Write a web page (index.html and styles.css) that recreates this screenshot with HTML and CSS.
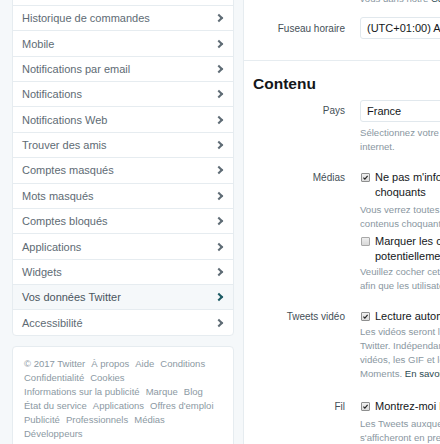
FILE: index.html
```html
<!DOCTYPE html>
<html lang="fr">
<head>
<meta charset="utf-8">
<title>Paramètres</title>
<link rel="stylesheet" href="styles.css">
</head>
<body>
<div class="page">
  <aside class="sidebar">
    <nav class="nav">
      <a class="nav-item"><span>Cartes et livraison</span><span class="chev"></span></a>
      <a class="nav-item"><span>Historique de commandes</span><span class="chev"></span></a>
      <a class="nav-item"><span>Mobile</span><span class="chev"></span></a>
      <a class="nav-item"><span>Notifications par email</span><span class="chev"></span></a>
      <a class="nav-item"><span>Notifications</span><span class="chev"></span></a>
      <a class="nav-item"><span>Notifications Web</span><span class="chev"></span></a>
      <a class="nav-item"><span>Trouver des amis</span><span class="chev"></span></a>
      <a class="nav-item"><span>Comptes masqués</span><span class="chev"></span></a>
      <a class="nav-item"><span>Mots masqués</span><span class="chev"></span></a>
      <a class="nav-item"><span>Comptes bloqués</span><span class="chev"></span></a>
      <a class="nav-item"><span>Applications</span><span class="chev"></span></a>
      <a class="nav-item"><span>Widgets</span><span class="chev"></span></a>
      <a class="nav-item is-active"><span>Vos données Twitter</span><span class="chev"></span></a>
      <a class="nav-item"><span>Accessibilité</span><span class="chev"></span></a>
    </nav>
    <footer class="site-footer">
      <span>© 2017 Twitter</span>
      <a>À propos</a>
      <a>Aide</a>
      <a>Conditions</a>
      <a>Confidentialité</a>
      <a>Cookies</a>
      <a>Informations sur la publicité</a>
      <a>Marque</a>
      <a>Blog</a>
      <a>État du service</a>
      <a>Applications</a>
      <a>Offres d'emploi</a>
      <a>Publicité</a>
      <a>Professionnels</a>
      <a>Médias</a>
      <a>Développeurs</a>
    </footer>
  </aside>

  <main class="panel">
    <section class="section section-top">
      <div class="form-row">
        <div class="label"></div>
        <div class="control">
          <p class="help">vous dans notre <a class="link">Centre de traduction</a>.</p>
        </div>
      </div>
      <div class="form-row row-tz">
        <div class="label">Fuseau horaire</div>
        <div class="control">
          <div class="select">(UTC+01:00) Amsterdam, Berlin, Berne, Rome</div>
        </div>
      </div>
    </section>

    <section class="section section-content">
      <h2 class="heading">Contenu</h2>
      <div class="form-row row-country">
        <div class="label">Pays</div>
        <div class="control">
          <div class="select">France</div>
          <p class="help help-country">Sélectionnez votre pays. Ce paramètre est enregistré sur ce navigateur<br>internet.</p>
        </div>
      </div>

      <div class="form-row row-media">
        <div class="label lh">Médias</div>
        <div class="control">
          <label class="check"><span class="box is-checked"><svg viewBox="0 0 10 10"><path d="M2 5.2 L4.1 7.3 L8 2.6"/></svg></span><span>Ne pas m'informer si les médias peuvent contenir des contenus<br>choquants</span></label>
          <p class="help help-a">Vous verrez toutes les photos et vidéos, même si elles contiennent des<br>contenus choquants.</p>
          <label class="check check-b"><span class="box"></span><span>Marquer les contenus multimédias que vous tweetez comme contenant des éléments<br>potentiellement choquants</span></label>
          <p class="help help-b">Veuillez cocher cette case si vos images ou vidéos sont susceptibles d'être choquantes<br>afin que les utilisateurs soient informés avant de les voir.</p>
        </div>
      </div>

      <div class="form-row row-video">
        <div class="label lh">Tweets vidéo</div>
        <div class="control">
          <label class="check"><span class="box is-checked"><svg viewBox="0 0 10 10"><path d="M2 5.2 L4.1 7.3 L8 2.6"/></svg></span><span>Lecture automatique des vidéos</span></label>
          <p class="help help-b">Les vidéos seront lues automatiquement sur le site Web de<br>Twitter. Indépendamment de ce paramètre, les<br>vidéos, les GIF et les Vines seront toujours lus automatiquement dans les<br>Moments. <a class="link">En savoir plus</a></p>
        </div>
      </div>

      <div class="form-row row-feed">
        <div class="label lh">Fil</div>
        <div class="control">
          <label class="check"><span class="box is-checked"><svg viewBox="0 0 10 10"><path d="M2 5.2 L4.1 7.3 L8 2.6"/></svg></span><span>Montrez-moi les meilleurs Tweets en premier</span></label>
          <p class="help help-a">Les Tweets auxquels vous êtes le plus susceptible de vous intéresser<br>s'afficheront en premier dans votre fil.</p>
        </div>
      </div>
    </section>
  </main>
</div>
</body>
</html>
```

FILE: styles.css
```css
* { box-sizing: border-box; }

html, body {
  margin: 0;
  padding: 0;
  height: 100%;
  overflow: hidden;
}

body {
  background: #f5f8fa;
  font-family: "Liberation Sans", Arial, sans-serif;
  color: #14171a;
}

.page {
  display: flex;
  align-items: flex-start;
  gap: 9px;
  padding-left: 12px;
  margin-top: -21.4px;
}

/* ---------- sidebar ---------- */
.sidebar {
  width: 222px;
  flex: none;
  display: flex;
  flex-direction: column;
  gap: 10px;
}

.nav {
  background: #fff;
  border: 1px solid #e6ecf0;
  border-radius: 4px;
  display: flex;
  flex-direction: column;
}

.nav-item {
  height: 25.385px;
  display: flex;
  align-items: center;
  justify-content: space-between;
  padding: 0 11px 0 9px;
  font-size: 11px;
  color: #5e6b74;
  text-decoration: none;
}

.nav-item + .nav-item {
  border-top: 1px solid #e6ecf0;
}

.nav-item.is-active {
  background: #f5f8fa;
  color: #4a555e;
}

.chev {
  width: 6px;
  height: 6px;
  flex: none;
  border-top: 2px solid #5f6c75;
  border-right: 2px solid #5f6c75;
  transform: rotate(45deg);
}

.is-active .chev {
  border-color: #1d5a63;
}

.site-footer {
  background: #fff;
  border: 1px solid #e6ecf0;
  border-radius: 4px;
  padding: 10px 13px 12px 11px;
  display: flex;
  flex-wrap: wrap;
  column-gap: 6px;
  font-size: 9.5px;
  line-height: 14px;
  color: #8c99a3;
  min-height: 120px;
  align-content: flex-start;
}

.site-footer > * {
  white-space: nowrap;
  color: inherit;
  text-decoration: none;
}

/* ---------- main panel ---------- */
.panel {
  flex: 1;
  min-width: 260px;
  background: #fff;
  border: 1px solid #e6ecf0;
  min-height: 480px;
}

.section-top {
  padding-top: 12.4px;
  padding-bottom: 21px;
  border-bottom: 1px solid #e6ecf0;
}

.form-row {
  display: flex;
  align-items: flex-start;
  gap: 15px;
}

.label {
  width: 101px;
  flex: none;
  text-align: right;
  font-size: 10px;
  color: #454f57;
}

.label.lh {
  line-height: 15px;
}

.control {
  width: 320px;
  flex: none;
  white-space: nowrap;
}

.row-tz {
  margin-top: 11px;
  align-items: center;
}

.select {
  height: 22px;
  border: 1px solid #e1e8ed;
  border-radius: 3px;
  padding-left: 6px;
  display: flex;
  align-items: center;
  font-size: 11px;
  color: #14171a;
  background: #fff;
}

.help {
  margin: 0;
  font-size: 9.6px;
  line-height: 14px;
  color: #8a97a1;
}

.link {
  color: #2b4a52;
  text-decoration: none;
}

.heading {
  margin: 13px 0 0 9px;
  font-size: 15.5px;
  line-height: 20px;
  font-weight: bold;
  color: #14171a;
}

.row-country {
  margin-top: 6px;
}

.row-country .label {
  line-height: 22px;
}

.help-country {
  margin-top: 4px;
}

.row-media {
  margin-top: 15.5px;
}

.row-video {
  margin-top: 15.5px;
}

.row-feed {
  margin-top: 17.5px;
}

.check {
  display: flex;
  align-items: flex-start;
  gap: 5px;
  padding-left: 1px;
  font-size: 11px;
  line-height: 15px;
  color: #14171a;
}

.check-b {
  margin-top: 2.5px;
}

.help-a {
  margin-top: 3.5px;
}

.help-b {
  margin-top: 1.5px;
}

.box {
  width: 9px;
  height: 9px;
  flex: none;
  margin-top: 3px;
  border: 1px solid #8e8f8f;
  border-radius: 1px;
  background: linear-gradient(#f0f0f0, #dcdcdc);
  display: flex;
  align-items: center;
  justify-content: center;
}

.box:not(.is-checked) {
  border-color: #a8a8a8;
  background: linear-gradient(#eeeeee, #d8d8d8);
}

.box svg {
  width: 9px;
  height: 9px;
}

.box svg path {
  fill: none;
  stroke: #222;
  stroke-width: 1.6;
}
```
